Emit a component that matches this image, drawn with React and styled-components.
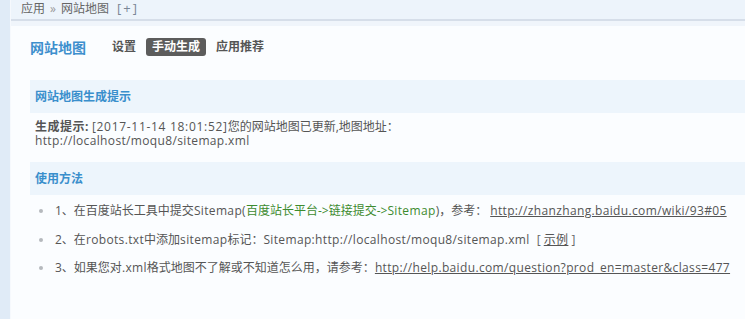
import React from 'react'
import styled, { createGlobalStyle } from 'styled-components'

const GlobalStyle = createGlobalStyle`
    html, body {
        margin: 0;
        padding: 0;
        height: 100%;
        background: #fbfdff;
    }
    body {
        font-family: "Open Sans", "Noto Sans CJK SC", sans-serif;
        font-size: 12px;
        color: #555;
    }
`

const Page = styled.div`
    display: flex;
    min-height: 100vh;
`
const SideStrip = styled.div`
    width: 10px;
    background: #e0ebf7;
    border-right: 1px solid #f6f9fd;
`
const Main = styled.div`
    flex: 1;
    display: flex;
    flex-direction: column;
`
const TopBar = styled.div`
    height: 19px;
    line-height: 17px;
    padding-left: 10px;
    background: #edf4fb;
    border-bottom: 2px solid #d6dee9;
    color: #666;
    white-space: nowrap;
`
const Sep = styled.span`
    color: #999;
    margin: 0 5px;
`
const AddBtn = styled.span`
    color: #7a8796;
    font-size: 13px;
    letter-spacing: 2px;
    margin-left: 8px;
`
const Content = styled.div`
    flex: 1;
    padding: 17px 0 0 19px;
    border-top: 5px solid #f0f5fb;
    background: #fbfdff;
`
const Nav = styled.div`
    display: flex;
    align-items: center;
    height: 18px;
    margin-top: -5px;
`
const Title = styled.div`
    font-size: 14px;
    font-weight: 700;
    color: #3d8fcd;
    margin-right: 20px;
`
const Tab = styled.div`
    font-weight: 700;
    height: 18px;
    line-height: 18px;
    padding: 0 6px;
    margin-right: 4px;
    border-radius: 3px;
    color: ${p => (p.$active ? '#fff' : '#555')};
    background: ${p => (p.$active ? '#5c5c5c' : 'transparent')};
`
const SectionHead = styled.div`
    height: 33px;
    line-height: 34px;
    padding-left: 5px;
    background: #edf5fc;
    color: #3a8fcc;
    font-weight: 700;
    margin-top: ${p => p.$top || 0}px;
`
const Notice = styled.div`
    padding: 7px 0 0 5px;
    line-height: 14px;
`
const Label = styled.b`
    color: #555;
    letter-spacing: 0.5px;
    margin-right: 3px;
`
const Latin = styled.span`
    letter-spacing: ${p => p.$ls || 0.35}px;
`
const List = styled.ul`
    list-style: none;
    margin: 0;
    padding: 9px 0 0 11px;
`
const Item = styled.li`
    position: relative;
    line-height: 14px;
    padding-left: 14px;
    margin-bottom: 14.5px;
    white-space: nowrap;
    &::before {
        content: '';
        position: absolute;
        left: -2px;
        top: 5px;
        width: 4px;
        height: 4px;
        border-radius: 50%;
        background: #b5b9bd;
    }
`
const Green = styled.span`
    color: #3d8b2f;
`
const Link = styled.a`
    color: #555;
    text-decoration: underline;
    letter-spacing: 0.35px;
    margin-left: ${p => p.$gap || 0}px;
`
const Bracket = styled.span`
    margin-left: 7px;
    color: #666;
`

export default function App() {
    return (
        <Page>
            <GlobalStyle />
            <SideStrip />
            <Main>
                <TopBar>
                    应用<Sep>»</Sep>网站地图<AddBtn>[+]</AddBtn>
                </TopBar>
                <Content>
                    <Nav>
                        <Title>网站地图</Title>
                        <Tab>设置</Tab>
                        <Tab $active>手动生成</Tab>
                        <Tab>应用推荐</Tab>
                    </Nav>
                    <SectionHead $top={24}>网站地图生成提示</SectionHead>
                    <Notice>
                        <Label>生成提示:</Label><Latin $ls={0.7}>[2017-11-14 18:01:52]</Latin>您的网站地图已更新,地图地址：<br />
                        <Latin>http://localhost/moqu8/sitemap.xml</Latin>
                    </Notice>
                    <SectionHead $top={14}>使用方法</SectionHead>
                    <List>
                        <Item>
                            1、在百度站长工具中提交<Latin>Sitemap(</Latin><Green>百度站长平台-&gt;链接提交-&gt;<Latin>Sitemap</Latin></Green>)，参考：
                            <Link $gap={3} href="#">http://zhanzhang.baidu.com/wiki/93#05</Link>
                        </Item>
                        <Item>
                            2、在<Latin>robots.txt</Latin>中添加<Latin>sitemap</Latin>标记：<Latin>Sitemap:http://localhost/moqu8/sitemap.xml</Latin>
                            <Bracket>[ <Link href="#">示例</Link> ]</Bracket>
                        </Item>
                        <Item>
                            3、如果您对<Latin>.xml</Latin>格式地图不了解或不知道怎么用，请参考：<Link href="#">http://help.baidu.com/question?prod_en=master&amp;class=477</Link>
                        </Item>
                    </List>
                </Content>
            </Main>
        </Page>
    )
}
